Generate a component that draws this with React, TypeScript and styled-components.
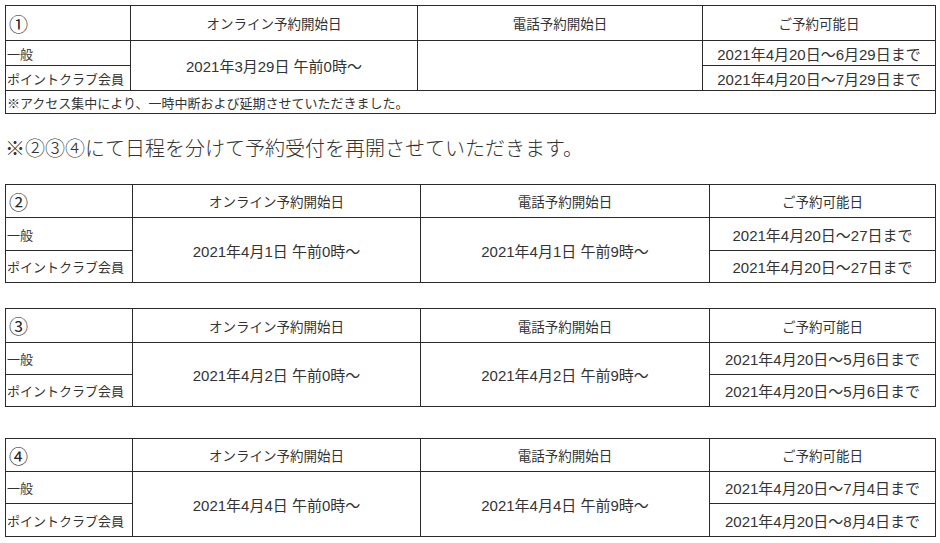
import styled, { createGlobalStyle } from "styled-components";

const GlobalStyle = createGlobalStyle`
  html, body {
    margin: 0;
    padding: 0;
    background: #fff;
  }
  body {
    font-family: "Liberation Sans", "Noto Sans CJK JP", sans-serif;
    color: #222;
  }
`;

const Page = styled.div`
  width: 940px;
  height: 543px;
  box-sizing: border-box;
  padding: 5px 0 0 5px;
  overflow: hidden;
`;

const Table = styled.table<{ $mt?: number }>`
  border-collapse: collapse;
  table-layout: fixed;
  width: 930px;
  margin-top: ${(p) => p.$mt ?? 0}px;
  td {
    border: 1px solid #2a2a2a;
    padding: 0;
    white-space: nowrap;
  }
`;

const Row = styled.tr<{ $h: number }>`
  height: ${(p) => p.$h}px;
`;

const NumCell = styled.td`
  font-family: "Noto Sans CJK JP", sans-serif;
  font-size: 19px;
  padding-left: 3px !important;
  text-align: left;
`;

const HeadCell = styled.td`
  font-family: "Noto Sans CJK JP", sans-serif;
  font-size: 13.5px;
  text-align: center;
  color: #333;
`;

const LabelCell = styled.td`
  font-family: "Noto Sans CJK JP", sans-serif;
  font-size: 13px;
  text-align: left;
  padding-left: 1px !important;
  color: #333;
`;

const DateCell = styled.td`
  font-size: 15px;
  text-align: center;
  color: #333;
`;

const NoteCell = styled.td`
  font-family: "Noto Sans CJK JP", sans-serif;
  font-size: 13px;
  text-align: left;
  padding-left: 1px !important;
  color: #333;
`;

const Notice = styled.p`
  margin: 0;
  padding: 22px 0 24px;
  line-height: 24px;
  font-family: "Noto Sans CJK JP", sans-serif;
  font-size: 20px;
  font-weight: 300;
  color: #333;
`;

type Schedule = {
  num: string;
  online: string;
  phone: string;
  general: string;
  member: string;
  heights: number[];
  mt: number;
};

const schedules: Schedule[] = [
  {
    num: "②",
    online: "2021年4月1日 午前0時～",
    phone: "2021年4月1日 午前9時～",
    general: "2021年4月20日～27日まで",
    member: "2021年4月20日～27日まで",
    heights: [33, 33, 32],
    mt: 0,
  },
  {
    num: "③",
    online: "2021年4月2日 午前0時～",
    phone: "2021年4月2日 午前9時～",
    general: "2021年4月20日～5月6日まで",
    member: "2021年4月20日～5月6日まで",
    heights: [34, 32, 32],
    mt: 25,
  },
  {
    num: "④",
    online: "2021年4月4日 午前0時～",
    phone: "2021年4月4日 午前9時～",
    general: "2021年4月20日～7月4日まで",
    member: "2021年4月20日～8月4日まで",
    heights: [33, 32, 33],
    mt: 31,
  },
];

function Cols({ widths }: { widths: number[] }) {
  return (
    <colgroup>
      {widths.map((w, i) => (
        <col key={i} style={{ width: w }} />
      ))}
    </colgroup>
  );
}

function ScheduleTable({ s }: { s: Schedule }) {
  return (
    <Table $mt={s.mt}>
      <Cols widths={[127, 288, 289, 226]} />
      <tbody>
        <Row $h={s.heights[0]}>
          <NumCell>{s.num}</NumCell>
          <HeadCell>オンライン予約開始日</HeadCell>
          <HeadCell>電話予約開始日</HeadCell>
          <HeadCell>ご予約可能日</HeadCell>
        </Row>
        <Row $h={s.heights[1]}>
          <LabelCell>一般</LabelCell>
          <DateCell rowSpan={2}>{s.online}</DateCell>
          <DateCell rowSpan={2}>{s.phone}</DateCell>
          <DateCell>{s.general}</DateCell>
        </Row>
        <Row $h={s.heights[2]}>
          <LabelCell>ポイントクラブ会員</LabelCell>
          <DateCell>{s.member}</DateCell>
        </Row>
      </tbody>
    </Table>
  );
}

export default function App() {
  return (
    <Page>
      <GlobalStyle />
      <Table>
        <Cols widths={[125, 287, 285, 233]} />
        <tbody>
          <Row $h={35}>
            <NumCell>①</NumCell>
            <HeadCell>オンライン予約開始日</HeadCell>
            <HeadCell>電話予約開始日</HeadCell>
            <HeadCell>ご予約可能日</HeadCell>
          </Row>
          <Row $h={25}>
            <LabelCell>一般</LabelCell>
            <DateCell rowSpan={2}>2021年3月29日 午前0時～</DateCell>
            <DateCell rowSpan={2}></DateCell>
            <DateCell>2021年4月20日～6月29日まで</DateCell>
          </Row>
          <Row $h={25}>
            <LabelCell>ポイントクラブ会員</LabelCell>
            <DateCell>2021年4月20日～7月29日まで</DateCell>
          </Row>
          <Row $h={23}>
            <NoteCell colSpan={4}>
              ※アクセス集中により、一時中断および延期させていただきました。
            </NoteCell>
          </Row>
        </tbody>
      </Table>
      <Notice>※②③④にて日程を分けて予約受付を再開させていただきます。</Notice>
      {schedules.map((s) => (
        <ScheduleTable key={s.num} s={s} />
      ))}
    </Page>
  );
}
